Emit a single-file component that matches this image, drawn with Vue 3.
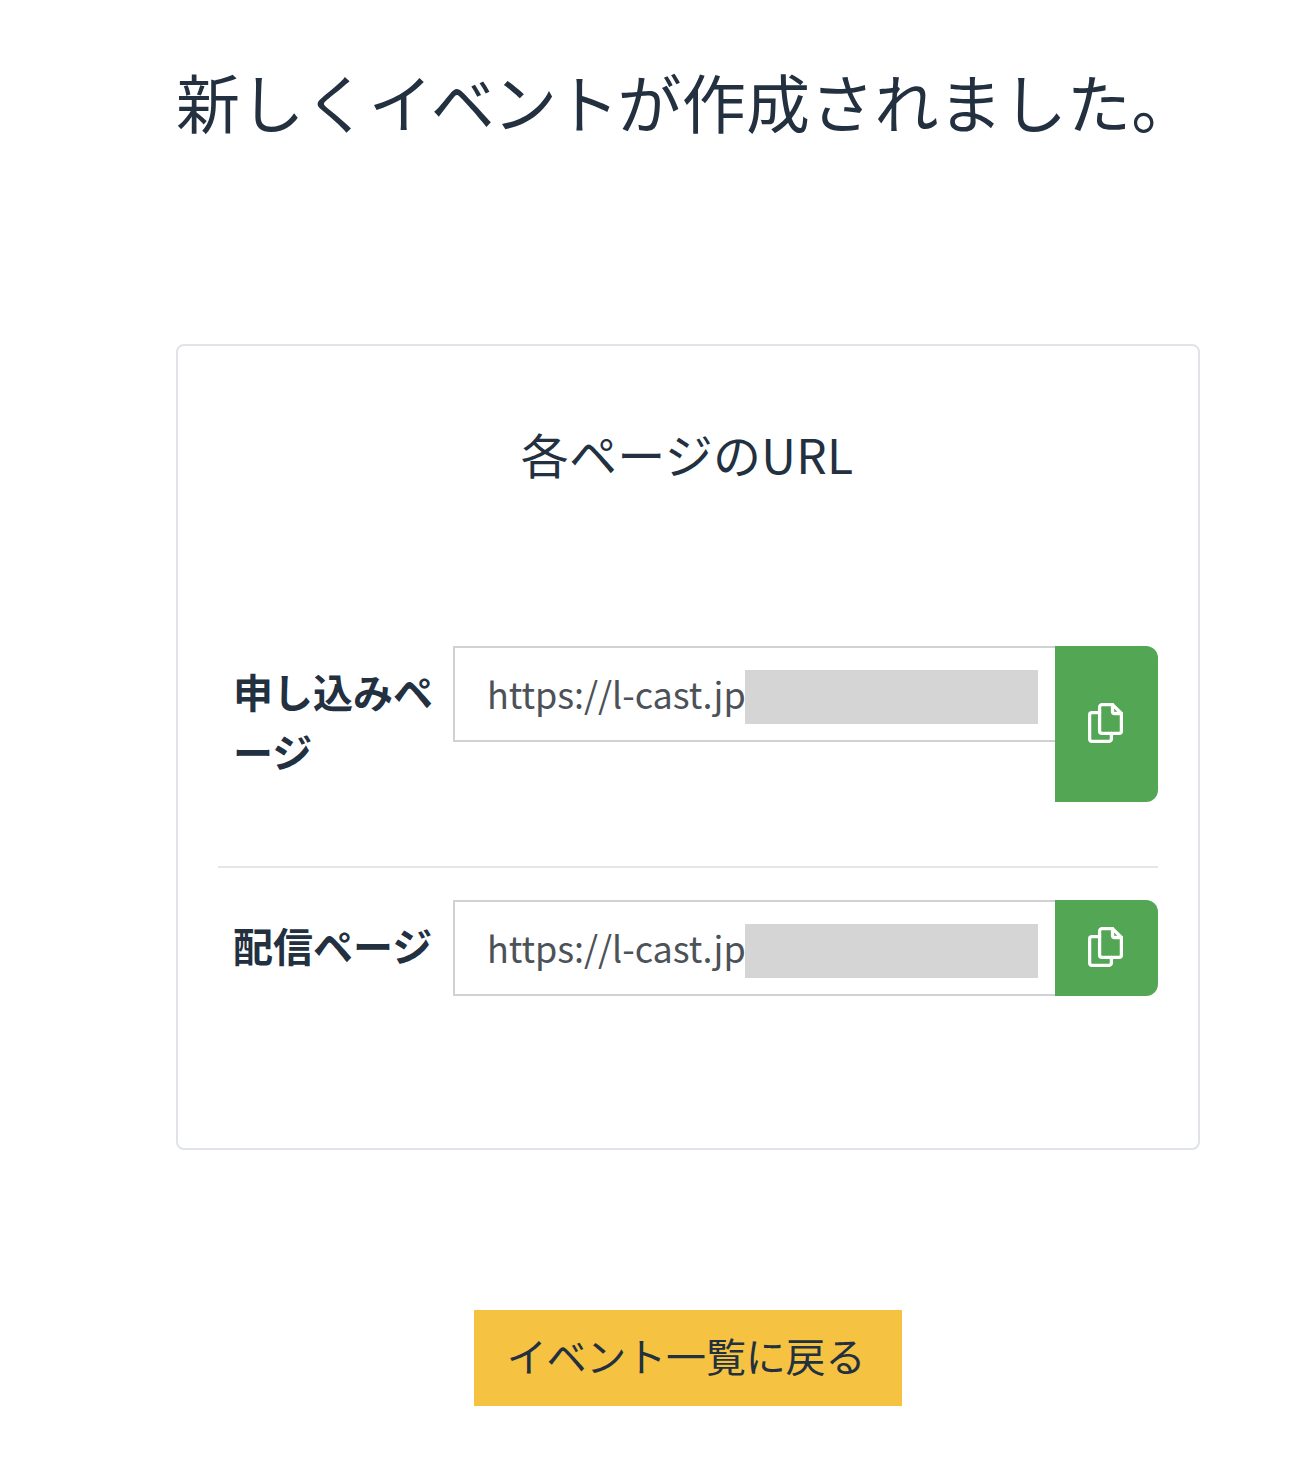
<script setup>
const urlRows = [
  { label: '申し込みページ', url: 'https://l-cast.jp' },
  { label: '配信ページ', url: 'https://l-cast.jp' },
];
</script>

<template>
  <main class="page">
    <h1 class="page-title">新しく<span class="kana-tight">イベント</span>が作成されました。</h1>

    <section class="url-card">
      <h2 class="card-title">各ページのURL</h2>

      <div class="url-list">
        <div v-for="row in urlRows" :key="row.label" class="url-row">
          <div class="url-label">{{ row.label }}</div>
          <div class="url-field">
            <div class="url-input">
              <span class="url-text">{{ row.url }}</span>
              <span class="url-mask"></span>
            </div>
            <button class="copy-btn" type="button" aria-label="copy">
              <svg class="copy-icon" viewBox="0 0 35 40" fill="none" stroke="#fff" stroke-width="3.300" stroke-linejoin="round" stroke-linecap="round">
                <path d="M14 1.600h10.500l8.900 8.900v17.500a2.400 2.400 0 0 1-2.400 2.400h-17a2.400 2.400 0 0 1-2.400-2.400v-24a2.400 2.400 0 0 1 2.400-2.400z" />
                <path d="M24.500 1.600v6.900a2 2 0 0 0 2 2h6.900" />
                <path d="M11.600 9.600h-7.600a2.400 2.400 0 0 0-2.400 2.400v24a2.400 2.400 0 0 0 2.400 2.400h17a2.400 2.400 0 0 0 2.400-2.400v-5.600" />
              </svg>
            </button>
          </div>
        </div>
      </div>
    </section>

    <div class="back-wrap">
      <button class="back-btn" type="button">イベント一覧に戻る</button>
    </div>
  </main>
</template>

<style scoped>
.page {
  box-sizing: border-box;
  width: 1308px;
  height: 1468px;
  padding: 0 108px 0 176px;
  background: #fff;
  color: #22303f;
  font-family: "Noto Sans CJK JP", "Noto Sans", sans-serif;
}

.page-title {
  margin: 0;
  padding-top: 53px;
  height: 344px;
  box-sizing: border-box;
  font-size: 64px;
  line-height: 94px;
  font-weight: 400;
  letter-spacing: 0.2px;
  white-space: nowrap;
}

.kana-tight {
  letter-spacing: -1.75px;
}

.url-card {
  box-sizing: border-box;
  height: 806px;
  padding: 0 40px;
  border: 2px solid #e0e4e8;
  border-radius: 8px;
}

.card-title {
  margin: 0;
  padding: 72px 2px 0 0;
  height: 300px;
  box-sizing: border-box;
  font-size: 48px;
  line-height: 70px;
  font-weight: 400;
  letter-spacing: 0.3px;
  text-align: center;
}

.url-row {
  display: grid;
  grid-template-columns: 235px 1fr;
  padding-bottom: 64px;
  margin-bottom: 32px;
  border-bottom: 2px solid #e6e6e6;
}

.url-row:last-child {
  padding-bottom: 0;
  margin-bottom: 0;
  border-bottom: 0;
}

.url-label {
  padding: 15px 0 21px 15px;
  font-size: 40px;
  line-height: 60px;
  font-weight: 700;
}

.url-field {
  display: flex;
  align-items: flex-start;
  align-self: stretch;
}

.url-input {
  box-sizing: border-box;
  flex: 1;
  height: 96px;
  display: flex;
  align-items: center;
  padding: 0 17px 0 33px;
  border: 2px solid #cfd2d4;
  border-right: 0;
  color: #4c5258;
  font-size: 36px;
  white-space: nowrap;
}

.url-text {
  width: 257px;
  flex-shrink: 0;
  margin-left: -1px;
  margin-right: 1px;
  margin-top: -2px;
  letter-spacing: -0.06px;
}

.url-mask {
  flex: 1;
  height: 54px;
  margin-top: 6px;
  background: #d5d5d5;
}

.copy-btn {
  width: 103px;
  align-self: stretch;
  min-height: 96px;
  padding: 0 2px 2px 0;
  border: 0;
  border-radius: 0 12px 12px 0;
  background: #53a653;
  display: flex;
  align-items: center;
  justify-content: center;
}

.copy-icon {
  width: 35px;
  height: 40px;
}

.back-wrap {
  display: flex;
  justify-content: center;
  padding-top: 160px;
}

.back-btn {
  width: 428px;
  height: 96px;
  padding: 0 4px 6px 0;
  border: 0;
  background: #f5c242;
  color: #22303f;
  font-family: inherit;
  font-size: 40px;
  letter-spacing: -0.15px;
}
</style>
